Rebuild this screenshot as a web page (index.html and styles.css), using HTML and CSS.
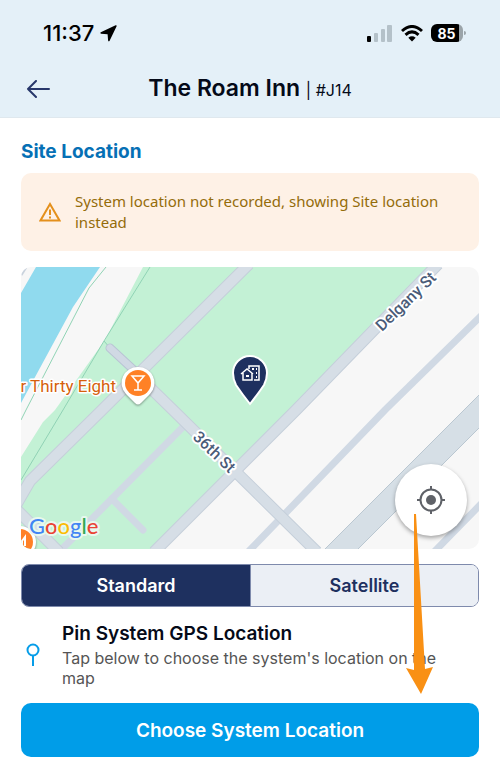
FILE: index.html
```
<!DOCTYPE html>
<html lang="en">
<head>
  <meta charset="UTF-8">
  <meta name="viewport" content="width=device-width, initial-scale=1.0">
  <title>The Roam Inn - Site Location</title>
  <link rel="stylesheet" href="styles.css">
</head>
<body>

  <header>
    <div class="status-bar">
      <div class="status-time">
        <span>11:37</span>
        <svg width="17" height="17" viewBox="0 0 17 17"><path d="M15.600 0.300 L0.800 7.300 Q-0.300 8.200 1 8.700 L7.600 9.200 L8.100 15.600 Q8.600 17 9.500 15.900 L16.600 1.300 Q16.900 0 15.600 0.300 Z"/></svg>
      </div>
      <div class="status-icons">
        <svg width="26" height="17" viewBox="0 0 26 17">
          <rect x="0" y="11" width="4" height="6" rx="1"/>
          <g fill="#b4c1c9">
            <rect x="7" y="8" width="4" height="9" rx="1"/>
            <rect x="14" y="4" width="4" height="13" rx="1"/>
            <rect x="20" y="0" width="5" height="17" rx="1"/>
          </g>
        </svg>
        <svg width="22" height="17" viewBox="0 0 22 17">
          <g fill="none" stroke="#000" stroke-width="3">
            <path d="M1 6 Q11 -3 21 6"/>
            <path d="M4.500 9.800 Q11 4 17.500 9.800"/>
          </g>
          <path d="M7.300 12.700 Q11 9.800 14.700 12.700 L11 16.500 Z"/>
        </svg>
        <div class="battery"><span>85</span></div>
      </div>
    </div>
    <div class="title-bar">
      <button class="back" aria-label="Back">
        <svg width="24" height="18" viewBox="0 0 24 18" fill="none" stroke="#27376b" stroke-width="2" stroke-linecap="round" stroke-linejoin="round"><path d="M23 9 H2 M10 1 L2 9 L10 17"/></svg>
      </button>
      <h1>The Roam Inn <small>| #J14</small></h1>
    </div>
  </header>

  <main>
    <h2>Site Location</h2>

    <div class="alert">
      <svg width="22" height="20" viewBox="0 0 22 20"><path d="M11 2 L20.500 18.500 H1.500 Z" fill="none" stroke="#e4901c" stroke-width="2"/><path d="M11 7.500 V13 M11 14.500 V16.500" stroke="#e4901c" stroke-width="2"/></svg>
      <p>System location not recorded, showing Site location instead</p>
    </div>

    <div class="map">
      <svg class="map-art" viewBox="0 0 458 282">
        <rect width="458" height="282" fill="#f7f7f7"/>
        <!-- river and park -->
        <path d="M15 0 H79 L52 40 L0 136 V26 Z" fill="#90daee"/>
        <path d="M5 0 L0 8" stroke="#c9d2dd" stroke-width="3"/>
        <path d="M122 0 H414 L136 282 H0 V190 L22 155 L34 143 L84 73 Z" fill="#c3f1d5"/>
        <g fill="none" stroke="#90d3b5" stroke-width="1">
          <path d="M85 0 L68 21 L5 143 L0 153"/>
          <path d="M129 0 L83 74 L42 143 L0 213"/>
          <path d="M83 74 L89 81"/>
        </g>
        <!-- lanes -->
        <g fill="none" stroke="#d0d9e4" stroke-width="7" stroke-linecap="round">
          <path d="M161 161 L42 281"/>
          <path d="M91 232 L122 263"/>
          <path d="M462 47 L364 143 L228 284"/>
          <path d="M462 235 L414 284"/>
        </g>
        <!-- street outlines, then fills -->
        <path d="M89 81 L116 106" stroke="#b9c4d4" stroke-width="9" stroke-linecap="round"/>
        <g fill="none" stroke="#c5cfda" stroke-width="12">
          <path d="M228 -3 L81 143 L9 214 L-6 240"/>
          <path d="M112 104 L152 143 L296 285"/>
          <path d="M417 -3 L275 143 L133 285"/>
          <path d="M-6 241 L38 285"/>
        </g>
        <path d="M89 81 L116 106" stroke="#d0d9e4" stroke-width="7" stroke-linecap="round"/>
        <g fill="none" stroke="#d6dee6" stroke-width="10">
          <path d="M228 -3 L81 143 L9 214 L-6 240"/>
          <path d="M112 104 L152 143 L296 285"/>
          <path d="M417 -3 L275 143 L133 285"/>
          <path d="M-6 241 L38 285"/>
        </g>
        <path d="M462 124 L302 284 H335 L462 157 Z" fill="#d6dfe6" stroke="#bac7d1"/>
        <g class="street">
          <text transform="translate(361 65) rotate(-44)">Delgany St</text>
          <text transform="translate(171 171) rotate(44)">36th St</text>
        </g>
        <!-- places -->
        <g class="place">
          <path d="M117 100 A16 16 0 0 1 129 127 L120 136 Q117 139 114 136 L105 127 A16 16 0 0 1 117 100 Z" fill="#fff"/>
          <circle cx="117" cy="116" r="13" fill="#ff8126"/>
          <path d="M111 109 H123 L117 116 Z M117 116 V123 M113 123 H121" fill="none" stroke="#fff" stroke-width="1.500"/>
          <circle cx="-1" cy="275" r="16" fill="#fff"/>
          <circle cx="-1" cy="275" r="13" fill="#ff8126"/>
          <path d="M1 279 V274 L4 270 V279" fill="none" stroke="#fff" stroke-width="2"/>
        </g>
        <text class="place-name" x="95" y="125" text-anchor="end">r Thirty Eight</text>
        <text class="google" x="8" y="267"><tspan fill="#4285f4">G</tspan><tspan fill="#ea4335">o</tspan><tspan fill="#fbbc05">o</tspan><tspan fill="#4285f4">g</tspan><tspan fill="#34a853">l</tspan><tspan fill="#ea4335">e</tspan></text>
        <!-- site pin -->
        <path d="M229 137 Q221 127 215 118 Q212 112 212 106 A17 17 0 0 1 246 106 Q246 112 243 118 Q237 127 229 137 Z" fill="#1e305f" stroke="#fff" stroke-width="2"/>
        <g fill="none" stroke="#fff">
          <path d="M220 107 L226 102 L232 107 M222 106 V113 H231 V106" stroke-width="1.500"/>
          <path d="M228 102 V99 H238 V113 H233" stroke-width="1.500"/>
          <path d="M225 109 H228 M231 102 H233 M235 102 H236 M235 106 H236 M235 110 H236" stroke-width="2"/>
        </g>
      </svg>
      <button class="locate" aria-label="My location">
        <svg width="28" height="28" viewBox="0 0 28 28" fill="none" stroke="#5f6268" stroke-width="2"><circle cx="14" cy="14" r="10.500"/><circle cx="14" cy="14" r="5" fill="#5f6268" stroke="none"/><path d="M14 0 V4 M14 24 V28 M0 14 H4 M24 14 H28"/></svg>
      </button>
    </div>

    <div class="toggle">
      <button class="active">Standard</button>
      <button>Satellite</button>
    </div>

    <div class="gps">
      <svg width="14" height="24" viewBox="0 0 14 24" fill="none" stroke="#069de8" stroke-width="2"><circle cx="7" cy="7" r="5.500"/><path d="M7 12.500 V23"/></svg>
      <div>
        <h3>Pin System GPS Location</h3>
        <p>Tap below to choose the system's location on the map</p>
      </div>
    </div>

    <button class="btn-primary">Choose System Location</button>

    <svg class="arrow" width="28" height="181" viewBox="0 0 28 181"><path d="M8 0 H10 L19 155 L27 153 L15 180 L0 154 L8 156 Z" fill="#f99014"/></svg>
  </main>

</body>
</html>
```
FILE: styles.css
```
* { box-sizing: border-box; margin: 0; padding: 0; }
body { background: #fff; color: #050a18; font-family: Inter, sans-serif; }
button { border: none; background: none; font-family: inherit; cursor: pointer; }
svg { display: block; flex-shrink: 0; }

header { background: #e4f0f8; height: 118px; padding: 20px 26px 0; border-bottom: 1px solid #dfe8ee; }
.status-bar { display: flex; justify-content: space-between; align-items: center; height: 26px; padding: 0 8px 0 17px; color: #000; }
.status-time { display: flex; align-items: center; gap: 6px; font-size: 22px; font-weight: 500; }
.status-icons { display: flex; align-items: center; gap: 8px; }
.battery { display: flex; align-items: center; justify-content: center; position: relative; width: 32px; height: 18px; margin-right: 3px; padding-right: 1px; border-radius: 6px; background: linear-gradient(to right, #000 28px, #9ba4a9 28px); color: #fff; font-size: 14px; font-weight: 700; }
.battery::after { content: ""; position: absolute; right: -3px; top: 7px; width: 2px; height: 4px; border-radius: 0 2px 2px 0; background: #9ba4a9; }

.title-bar { display: grid; grid-template-columns: 24px 1fr 24px; align-items: center; margin-top: 28px; height: 28px; }
h1 { font-size: 23px; line-height: 28px; font-weight: 600; text-align: center; }
h1 small { font-size: 16px; font-weight: 400; }

main { position: relative; padding: 22px 21px; }
h2 { color: #0670b5; font-size: 19px; line-height: 24px; font-weight: 700; }
.alert { display: flex; align-items: center; gap: 14px; margin-top: 9px; padding: 18px; min-height: 78px; border-radius: 10px; background: #fef1e6; color: #946c0a; }
.alert p { padding-right: 16px; font-family: "Noto Sans", sans-serif; font-size: 15px; line-height: 21px; }

.map { position: relative; margin-top: 16px; border-radius: 10px; overflow: hidden; }
.map-art { width: 100%; }
.street text { font: 500 16px Roboto, sans-serif; fill: #4a5b78; stroke: #fff; stroke-width: 4px; stroke-linejoin: round; paint-order: stroke; }
.place { filter: drop-shadow(0 1px 1px rgba(0,0,0,0.4)); }
.place-name { font: 400 17px Roboto, sans-serif; fill: #d65f0c; stroke: #fff; stroke-width: 3px; stroke-linejoin: round; paint-order: stroke; }
.google { font: 500 22px Lato, sans-serif; stroke: #e8f8ee; stroke-width: 4px; stroke-linejoin: round; paint-order: stroke; }
.locate { position: absolute; right: 12px; bottom: 13px; display: flex; align-items: center; justify-content: center; width: 72px; height: 72px; border-radius: 50%; background: #fff; box-shadow: 0 2px 4px rgba(0,0,0,0.35); }

.toggle { display: grid; grid-template-columns: 1fr 1fr; margin-top: 15px; height: 43px; border: 1px solid #7e8aac; border-radius: 8px; overflow: hidden; }
.toggle button { background: #ebeff5; color: #1e305f; font-size: 18px; font-weight: 600; }
.toggle .active { background: #1e305f; color: #fff; }
.toggle button + button { border-left: 1px solid #7e8aac; }

.gps { display: flex; align-items: center; gap: 22px; margin-top: 15px; padding: 0 24px 0 5px; }
h3 { font-size: 19px; line-height: 24px; font-weight: 600; }
.gps p { margin-top: 2px; color: #555; font-size: 16px; line-height: 20px; }

.btn-primary { width: 100%; height: 54px; margin-top: 15px; border-radius: 10px; background: #009de8; color: #fff; font-size: 19px; font-weight: 600; }
.arrow { position: absolute; right: 66px; bottom: 84px; pointer-events: none; }
```
